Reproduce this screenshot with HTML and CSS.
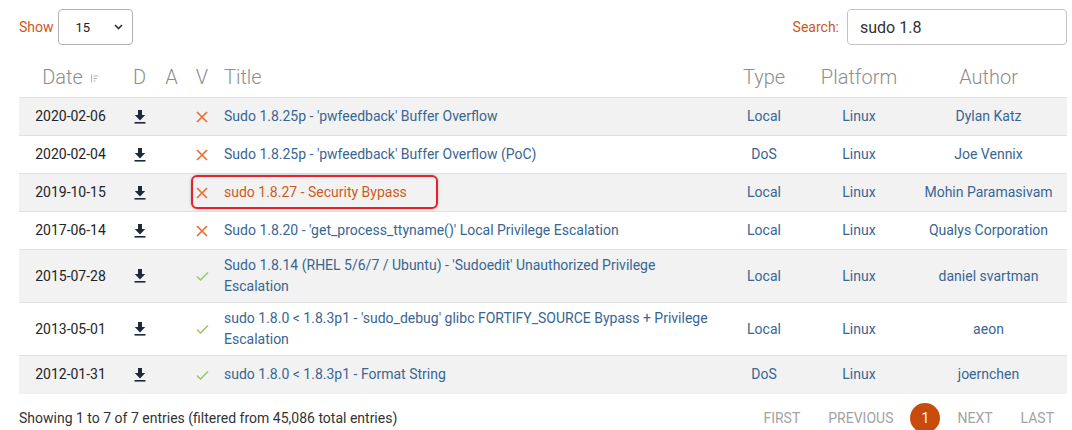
FILE: index.html
```html
<!DOCTYPE html>
<html>
<head>
<meta charset="utf-8">
<link rel="stylesheet" href="styles.css">
</head>
<body>
<div class="page">
  <div class="controls">
    <div class="show">
      <span class="lbl">Show</span>
      <div class="select"><span>15</span>
        <svg width="9" height="6" viewBox="0 0 9 6"><path d="M1 1l3.5 3.5L8 1" fill="none" stroke="#333" stroke-width="1.6"/></svg>
      </div>
    </div>
    <div class="search">
      <span class="lbl">Search:</span>
      <div class="input">sudo 1.8</div>
    </div>
  </div>

  <table class="grid">
    <colgroup>
      <col class="c-date"><col class="c-d"><col class="c-a"><col class="c-v"><col class="c-title"><col class="c-type"><col class="c-plat"><col class="c-auth">
    </colgroup>
    <thead>
      <tr>
        <th>Date <svg class="sort" width="9" height="9" viewBox="0 0 9 9"><path d="M1.5 0.5v8M3.5 2h5M3.5 4.5h3.5M3.5 7h2" stroke="#b0b0b0" stroke-width="1" fill="none"/></svg></th>
        <th>D</th><th>A</th><th>V</th>
        <th class="left">Title</th>
        <th>Type</th><th>Platform</th><th>Author</th>
      </tr>
    </thead>
    <tbody>
      <tr>
        <td class="date">2020-02-06</td>
        <td><svg class="dl" width="12" height="14" viewBox="0 0 12 14"><path d="M4 0h4v5h3.2L6 10.4 0.8 5H4z" fill="#1b2b3d"/><rect x="0.5" y="12" width="11" height="1.6" fill="#1b2b3d"/></svg></td>
        <td></td>
        <td><svg class="x" width="12" height="12" viewBox="0 0 12 12"><path d="M1 1l10 10M11 1L1 11" stroke="#f06a2a" stroke-width="1.6"/></svg></td>
        <td class="title"><a>Sudo 1.8.25p - 'pwfeedback' Buffer Overflow</a></td>
        <td class="lnk">Local</td><td class="lnk">Linux</td><td class="lnk">Dylan Katz</td>
      </tr>
      <tr>
        <td class="date">2020-02-04</td>
        <td><svg class="dl" width="12" height="14" viewBox="0 0 12 14"><path d="M4 0h4v5h3.2L6 10.4 0.8 5H4z" fill="#1b2b3d"/><rect x="0.5" y="12" width="11" height="1.6" fill="#1b2b3d"/></svg></td>
        <td></td>
        <td><svg class="x" width="12" height="12" viewBox="0 0 12 12"><path d="M1 1l10 10M11 1L1 11" stroke="#f06a2a" stroke-width="1.6"/></svg></td>
        <td class="title"><a>Sudo 1.8.25p - 'pwfeedback' Buffer Overflow (PoC)</a></td>
        <td class="lnk">DoS</td><td class="lnk">Linux</td><td class="lnk">Joe Vennix</td>
      </tr>
      <tr>
        <td class="date">2019-10-15</td>
        <td><svg class="dl" width="12" height="14" viewBox="0 0 12 14"><path d="M4 0h4v5h3.2L6 10.4 0.8 5H4z" fill="#1b2b3d"/><rect x="0.5" y="12" width="11" height="1.6" fill="#1b2b3d"/></svg></td>
        <td></td>
        <td class="hl"><span class="hlbox"></span><svg class="x" width="12" height="12" viewBox="0 0 12 12"><path d="M1 1l10 10M11 1L1 11" stroke="#f06a2a" stroke-width="1.6"/></svg></td>
        <td class="title"><a class="active">sudo 1.8.27 - Security Bypass</a></td>
        <td class="lnk">Local</td><td class="lnk">Linux</td><td class="lnk">Mohin Paramasivam</td>
      </tr>
      <tr>
        <td class="date">2017-06-14</td>
        <td><svg class="dl" width="12" height="14" viewBox="0 0 12 14"><path d="M4 0h4v5h3.2L6 10.4 0.8 5H4z" fill="#1b2b3d"/><rect x="0.5" y="12" width="11" height="1.6" fill="#1b2b3d"/></svg></td>
        <td></td>
        <td><svg class="x" width="12" height="12" viewBox="0 0 12 12"><path d="M1 1l10 10M11 1L1 11" stroke="#f06a2a" stroke-width="1.6"/></svg></td>
        <td class="title"><a>Sudo 1.8.20 - 'get_process_ttyname()' Local Privilege Escalation</a></td>
        <td class="lnk">Local</td><td class="lnk">Linux</td><td class="lnk">Qualys Corporation</td>
      </tr>
      <tr>
        <td class="date">2015-07-28</td>
        <td><svg class="dl" width="12" height="14" viewBox="0 0 12 14"><path d="M4 0h4v5h3.2L6 10.4 0.8 5H4z" fill="#1b2b3d"/><rect x="0.5" y="12" width="11" height="1.6" fill="#1b2b3d"/></svg></td>
        <td></td>
        <td><svg class="ok" width="13" height="10" viewBox="0 0 13 10"><path d="M1 5.5l3.5 3.5L12 1.5" fill="none" stroke="#9cc46a" stroke-width="1.5"/></svg></td>
        <td class="title"><a>Sudo 1.8.14 (RHEL 5/6/7 / Ubuntu) - 'Sudoedit' Unauthorized Privilege Escalation</a></td>
        <td class="lnk">Local</td><td class="lnk">Linux</td><td class="lnk">daniel svartman</td>
      </tr>
      <tr>
        <td class="date">2013-05-01</td>
        <td><svg class="dl" width="12" height="14" viewBox="0 0 12 14"><path d="M4 0h4v5h3.2L6 10.4 0.8 5H4z" fill="#1b2b3d"/><rect x="0.5" y="12" width="11" height="1.6" fill="#1b2b3d"/></svg></td>
        <td></td>
        <td><svg class="ok" width="13" height="10" viewBox="0 0 13 10"><path d="M1 5.5l3.5 3.5L12 1.5" fill="none" stroke="#9cc46a" stroke-width="1.5"/></svg></td>
        <td class="title"><a>sudo 1.8.0 &lt; 1.8.3p1 - 'sudo_debug' glibc FORTIFY_SOURCE Bypass + Privilege Escalation</a></td>
        <td class="lnk">Local</td><td class="lnk">Linux</td><td class="lnk">aeon</td>
      </tr>
      <tr>
        <td class="date">2012-01-31</td>
        <td><svg class="dl" width="12" height="14" viewBox="0 0 12 14"><path d="M4 0h4v5h3.2L6 10.4 0.8 5H4z" fill="#1b2b3d"/><rect x="0.5" y="12" width="11" height="1.6" fill="#1b2b3d"/></svg></td>
        <td></td>
        <td><svg class="ok" width="13" height="10" viewBox="0 0 13 10"><path d="M1 5.5l3.5 3.5L12 1.5" fill="none" stroke="#9cc46a" stroke-width="1.5"/></svg></td>
        <td class="title"><a>sudo 1.8.0 &lt; 1.8.3p1 - Format String</a></td>
        <td class="lnk">DoS</td><td class="lnk">Linux</td><td class="lnk">joernchen</td>
      </tr>
    </tbody>
  </table>

  <div class="footer">
    <div class="info">Showing 1 to 7 of 7 entries (filtered from 45,086 total entries)</div>
    <div class="pager">
      <span class="pg">FIRST</span>
      <span class="pg">PREVIOUS</span>
      <span class="cur">1</span>
      <span class="pg">NEXT</span>
      <span class="pg last">LAST</span>
    </div>
  </div>
</div>
</body>
</html>
```

FILE: styles.css
```css
html, body {
  margin: 0;
  background: #fff;
}
body {
  font-family: Roboto, "Liberation Sans", sans-serif;
  color: #212529;
}
.page {
  width: 1048px;
  padding: 9px 5px 0 19px;
}
.controls {
  display: flex;
  justify-content: space-between;
  align-items: center;
  height: 36px;
}
.show, .search {
  display: flex;
  align-items: center;
}
.lbl {
  color: #d1561c;
  font-size: 14px;
}
.show .lbl { margin-right: 4px; }
.search .lbl { margin-right: 8px; }
.select {
  box-sizing: border-box;
  width: 75px;
  height: 36px;
  border: 1px solid #b3b3b3;
  border-radius: 4px;
  display: flex;
  align-items: center;
  justify-content: space-between;
  padding: 0 9px 0 17px;
  font-size: 13px;
  color: #222;
}
.input {
  box-sizing: border-box;
  width: 220px;
  height: 36px;
  border: 1px solid #c4c4c4;
  border-radius: 4px;
  display: flex;
  align-items: center;
  padding: 0 12px;
  font-size: 16px;
  color: #333;
}
.grid {
  margin-top: 12px;
  width: 1048px;
  table-layout: fixed;
  border-collapse: collapse;
}
.c-date { width: 103px; }
.c-d { width: 35px; }
.c-a { width: 29px; }
.c-v { width: 32px; }
.c-title { width: 502px; }
.c-type { width: 88px; }
.c-plat { width: 102px; }
.c-auth { width: 157px; }
th {
  height: 40px;
  padding: 0;
  font-weight: 300;
  font-size: 20px;
  color: #8d8d8d;
  text-align: center;
  vertical-align: middle;
}
th.left {
  text-align: left;
  padding-left: 6px;
}
.sort {
  vertical-align: 1px;
  margin-left: 2px;
}
tbody tr {
  height: 38px;
}
tbody tr:nth-child(odd) {
  background: #f2f2f2;
}
td {
  border-top: 1px solid #dee0e3;
  padding: 5px 0;
  font-size: 14px;
  line-height: 21px;
  text-align: center;
  vertical-align: middle;
}
td svg {
  display: block;
  margin: 0 auto;
}
td.date {
  color: #212529;
}
td.title {
  text-align: left;
  padding: 5px 6px;
}
td.title a, td.lnk {
  color: #386692;
}
td.title a.active {
  color: #cf5a1c;
}
td.hl {
  position: relative;
}
.hlbox {
  position: absolute;
  left: 5px;
  top: 1px;
  width: 247px;
  height: 34px;
  box-sizing: border-box;
  border: 2px solid #e5212b;
  border-radius: 6px;
  box-shadow: 0 0 3px rgba(0, 0, 0, 0.25);
}
.footer {
  display: flex;
  justify-content: space-between;
  align-items: center;
  margin-top: 9px;
  height: 30px;
}
.info {
  font-size: 14px;
  color: #333;
}
.pager {
  display: flex;
  align-items: center;
}
.pg {
  padding: 0 14px;
  font-size: 14px;
  color: #a3a3a3;
}
.pg.last {
  padding-right: 13px;
}
.cur {
  width: 30px;
  height: 30px;
  margin: 0 3px;
  border-radius: 50%;
  background: #c94b0c;
  color: #fff;
  font-size: 14px;
  display: flex;
  align-items: center;
  justify-content: center;
}
```
